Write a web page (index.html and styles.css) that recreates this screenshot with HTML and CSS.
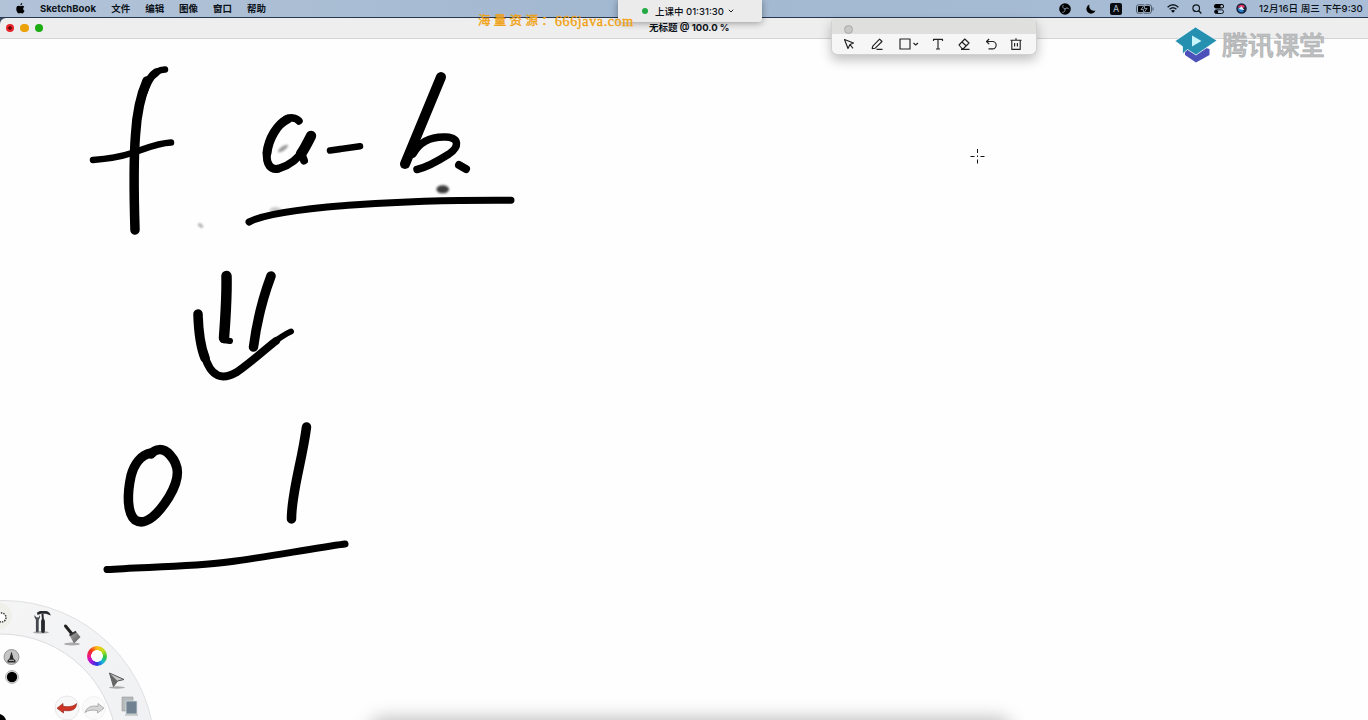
FILE: index.html
```html
<!DOCTYPE html>
<html lang="zh-CN">
<head>
<meta charset="utf-8">
<title>SketchBook</title>
<link rel="stylesheet" href="styles.css">
</head>
<body>
<div class="desktop">
  <header class="menubar">
    <nav class="menus">
      <svg class="apple" viewBox="0 0 10 12"><path d="M7 0C5.500 .2 4.700 1.400 4.900 2.600 6.200 2.500 7 1.300 7 0ZM5 3.500C4.300 3.500 3.700 3 2.900 3 1.300 3 .3 4.400 .3 6.500.3 9 1.900 11.500 3.100 11.500 3.800 11.500 4.200 11.100 5 11.100S6.200 11.500 6.900 11.500C8 11.500 9 10 9.500 8.600 8.600 8.200 8 7.400 8 6.300 8 5.300 8.500 4.600 9.200 4.100 8.700 3.400 7.900 3 7.100 3 6.200 3 5.600 3.500 5 3.500Z"/></svg>
      <span class="app">SketchBook</span><span>文件</span><span>编辑</span><span>图像</span><span>窗口</span><span>帮助</span>
    </nav>
    <div class="status">
      <svg class="i-obs" viewBox="0 0 12 12"><circle cx="6" cy="6" r="5.800"/><path d="M6 6C4 5.500 3.200 3.800 4.200 2.200M6 6C7.300 4.500 9.200 4.700 10 6.300M6 6C6.500 8 5.200 9.500 3.300 9.300" fill="none" stroke="#8799aa" stroke-width="1"/></svg>
      <svg class="i-moon" viewBox="0 0 10 10"><path d="M3.500.5A4.700 4.700 0 1 0 9.500 6.600 4.800 4.800 0 0 1 3.500.5Z"/></svg>
      <span class="input-source">A</span>
      <svg class="i-battery" viewBox="0 0 18 10"><rect x=".5" y=".8" width="15" height="8.400" rx="2" fill="none" stroke="#4b5967"/><rect x="2" y="2" width="12" height="6" rx=".7"/><path d="M17 3.500v3" stroke="#4b5967"/><path d="M9 0 5 5.600h2.700L7 10l4-5.600H8.300Z" stroke="#a9bdd2" stroke-width=".8"/></svg>
      <svg class="i-wifi" viewBox="0 0 12 9"><g fill="none" stroke="#101820" stroke-width="1.400"><path d="M.6 3.200Q6-1.500 11.400 3.200M2.600 5.200Q6 2.300 9.400 5.200"/></g><path d="M4 6.700Q6 5.100 8 6.700L6 8.800Z"/></svg>
      <svg class="i-search" viewBox="0 0 10 10"><path d="M6.800 6.800 9.300 9.400" stroke="#101820" stroke-width="1.400"/><circle cx="4.200" cy="4.200" r="3.300" fill="none" stroke="#101820" stroke-width="1.200"/></svg>
      <svg class="i-control" viewBox="0 0 10 10"><rect width="10" height="4.400" rx="2.200"/><circle cx="7.700" cy="2.200" r="1.300" fill="#a9bdd2"/><rect x=".5" y="5.800" width="9" height="3.700" rx="1.850" fill="none" stroke="#101820"/><circle cx="2.500" cy="7.650" r="1.700"/></svg>
      <svg class="i-siri" viewBox="0 0 12 12"><circle cx="6" cy="6" r="5.700" fill="#17223d"/><path d="M2 5C3 1.500 8 .8 9.800 4.300L6 6Z" fill="#e73562"/><path d="M2 5.500 6 4.500 8.500 9.500C5 11.500 1.500 9 2 5.500Z" fill="#247fcb"/><path d="M3 6.500 6 3.500 9.300 8Z" fill="#dff5ff"/></svg>
      <time class="clock">12月16日 周三 下午9:30</time>
    </div>
  </header>

  <div class="titlebar">
    <div class="lights"><i class="light close"></i><i class="light min"></i><i class="light max"></i></div>
    <span class="title">无标题 @ 100.0 %</span>
  </div>

  <main class="canvas">
    <svg class="ink" viewBox="0 39 1368 681">
      <g class="smudge">
        <ellipse cx="283" cy="148.500" rx="6" ry="2" transform="rotate(-35 283 148.500)" fill="#999"/>
        <ellipse cx="275.500" cy="210" rx="6" ry="3" fill="#ccc"/>
        <ellipse cx="200.500" cy="225.500" rx="3" ry="1.600" transform="rotate(35 200.500 225.500)" fill="#aaa"/>
        <ellipse cx="442.700" cy="189.300" rx="6.300" ry="4" fill="#3d3d3d"/>
      </g>
      <g class="strokes">
        <path stroke-width="6.500" d="M165 69.500C158 70 154 73 151 77"/>
        <path stroke-width="8" d="M156 72.500C150 76 146 85 143 94"/>
        <path stroke-width="9.500" d="M147 81C139 99 136.500 118 135.500 135 133.500 160 133.500 181 135 230"/>
        <path stroke-width="6.500" d="M93 160C107 159 120 157 132 153 147 148 158 143 171 142.500"/>
        <path stroke-width="7.500" d="M299 121C296 117.500 290 117 286 119"/>
        <path stroke-width="9" d="M288 119C277 124 268.500 139 267 153"/>
        <path stroke-width="8" d="M267 151C265.500 165 271 170.500 279 168.500 291 165 300 156 305 148"/>
        <path stroke-width="10.500" d="M311 136C308 142 305 148 301 154"/>
        <path stroke-width="8" d="M301 153 304 160.500"/>
        <path stroke-width="6.500" d="M330 150.500 360 146.300"/>
        <path stroke-width="10" d="M441 77 405 164"/>
        <path stroke-width="7.500" d="M413 154C421 139 434 136.500 446 137 460 138 459 147 449 154 438 161 428 167 417 169.500"/>
        <path stroke-width="8" d="M459 165 466 169"/>
        <path stroke-width="7" d="M249 222C269 212 323 207 360 204.500 410 201 455 200 511 200.300"/>
        <path stroke-width="10.500" d="M226.500 276C227 299 225.500 316 224 338"/>
        <path stroke-width="6" d="M223 340 230 341"/>
        <path stroke-width="9.500" d="M271 276C262 300 257 320 253.500 347"/>
        <path stroke-width="9.500" d="M198 314C198.500 332 201 348 205 358"/>
        <path stroke-width="8" d="M204 354C211 379 223 380 237 372 253 361 270 345 276 341"/>
        <path stroke-width="6" d="M270 345C278 339 285 334 291 331.500"/>
        <path stroke-width="9.500" d="M151 453C141 455 134 464 131 476 127 494 127 513 135 520 146 527 159 513 169 497 181 477 179 465 170 455 163 447 155 449 151 454"/>
        <path stroke-width="9.500" d="M306.500 427C302 462 291.500 492 291.500 519"/>
        <path stroke-width="7" d="M107 569.500C140 567 190 567 228 562 268 557 308 549 345 544"/>
      </g>
      <path class="cursor" d="M977.500 149v4M977.500 155.500v1.500M977.500 159.500v4M970.500 156.500h4M980.500 156.500h4"/>
    </svg>
    <div class="dock-shadow"></div>
  </main>

  <div class="class-pill"><i class="live"></i><span>上课中 01:31:30</span><svg class="chev" viewBox="0 0 6 4"><path d="M.8.8 3 3 5.200.8"/></svg></div>

  <div class="watermark"><span class="wm-cn">海量资源：</span><span class="wm-url">666java.com</span></div>

  <div class="palette">
    <div class="grip"><i></i></div>
    <div class="tools">
      <svg viewBox="0 0 12 12" class="t1"><path d="M1.500 1.500 10.500 5 7 6.500 5 10.500ZM7 6.500 10 10.300"/></svg>
      <svg viewBox="0 0 12 12" class="t2"><path d="M1 10.800 2 7.800 8.600 1.200 11 3.500 4 10.300 1 10.800M5.500 11.300H11.500"/></svg>
      <svg viewBox="0 0 20 12" class="t3"><path d="M1 1h10v10H1ZM14.500 5 16.700 7 19 5"/></svg>
      <svg viewBox="0 0 12 12" class="t4"><path d="M1.500 3V1.300h9V3M6 1.300V11M4 11h4"/></svg>
      <svg viewBox="0 0 12 12" class="t5"><path d="M1 7 6.800 1 11 5 5.500 10.500H4ZM4 4 8.300 8M3 11.300h8.500"/></svg>
      <svg viewBox="0 0 12 12" class="t6"><path d="M4.200 1 1.500 3.500 4.200 6.200M1.800 3.500H7.500A3.600 3.600 0 0 1 7.500 10.800H3.500"/></svg>
      <svg viewBox="0 0 12 12" class="t7"><path d="M.5 2.200h11M6 .3v1.700M1.800 2.500V11.300h8.400V2.500M4.600 5v3.500M7.400 5v3.500"/></svg>
    </div>
  </div>

  <div class="brand">
    <svg class="brand-mark" viewBox="0 0 42 36"><path d="M10 24 21 18 34.500 22V28L21 35.500 10 28Z" fill="#4b51b8"/><path d="M20.500 0 42 13.500 21 28 12.500 22.500 7.500 27V19.500L0 14Z" fill="#2590b0" stroke="#f5fafb" stroke-width=".8"/><path d="M17 8.500 26.500 14 17 19.500Z" fill="#c8f4fb"/></svg>
    <span>腾讯课堂</span>
  </div>

  <aside class="puck">
    <svg viewBox="0 590 170 130">
      <defs>
        <linearGradient id="ring" x1="0" y1="0" x2="1" y2="1"><stop offset="0" stop-color="#f7f7f7"/><stop offset="1" stop-color="#eeeff2"/></linearGradient>
        <linearGradient id="brushGray" x1="0" y1="0" x2="1" y2="1"><stop offset="0" stop-color="#aaa"/><stop offset="1" stop-color="#555"/></linearGradient>
      </defs>
      <circle cx="3" cy="752.500" r="152" fill="url(#ring)" stroke="#d8d9db" stroke-width=".8"/>
      <circle cx="-2" cy="616" r="14" fill="#f0f0eb"/>
      <circle cx="1" cy="750" r="116" fill="#fefefe" stroke="#d2d3d5" stroke-width=".8"/>
      <circle cx="1.500" cy="617.500" r="4.500" fill="#fff" stroke="#333" stroke-width="1.500" stroke-dasharray="1.500 1"/>
      <g fill="#aaa"><ellipse cx="41" cy="632.300" rx="8" ry="1.300"/><ellipse cx="72" cy="644" rx="8" ry="1.400"/><ellipse cx="117" cy="687.500" rx="8" ry="1.200"/></g>
      <path d="M37.300 619V631" stroke="#44484e" stroke-width="2.800" stroke-linecap="round"/>
      <path d="M34.500 615C34 618.500 36 620 37.500 620S40.500 618 40 615L38.500 617.500H36.500Z" fill="#4b4e53"/>
      <path d="M42.500 614 43 621" stroke="#25282c" stroke-width="2"/><path d="M43 621V631" stroke="#25282c" stroke-width="3.800" stroke-linecap="round"/>
      <path d="M37 612.500 40 611H45.500C48 611 50 612.500 50.800 615.500L46 613.700H41L37.500 615Z" fill="#25282c"/>
      <path d="M65.500 626 72 634" stroke="#222" stroke-width="3" stroke-linecap="round"/>
      <path d="M69.500 635.500 76 631.500 80.500 637 74 643.500Z" fill="url(#brushGray)"/><path d="M69.500 635.500 76 631.500" stroke="#333" stroke-width="2"/>
      <path d="M109.500 673 124 679.500 117.500 681 113.500 686.500Z" fill="#c8c8c8" stroke="#555" stroke-width="1"/><path d="M109.500 673 117.500 681 113.500 686.500Z" fill="#666"/>
      <path d="M122 697H133V711H122Z" fill="#b7babc" stroke="#999" stroke-width=".6"/><path d="M126 701H137V714H126Z" fill="#708191" stroke="#d7dde1" stroke-width=".8"/><path d="M125 715H138" stroke="#aaa"/>
      <circle cx="11.500" cy="657" r="7.500" fill="#c5c5c5" stroke="#777" stroke-width=".7"/><path d="M11.500 651.500 12.800 656 13.500 658.500 15.500 660.500V662.500H7.500V660.500L9.500 658.500 10.200 656Z" fill="#292929"/><path d="M9 660.300h5" stroke="#eee" stroke-width=".8"/>
      <circle cx="12" cy="677" r="6.300" fill="#fff" stroke="#888" stroke-width=".8"/><circle cx="12" cy="677" r="5.200"/>
      <circle cx="67" cy="708" r="12" fill="#f8f8f8" stroke="#e0e0e0" stroke-width=".7"/><circle cx="94" cy="708" r="11.500" fill="#fafafa" stroke="#eee" stroke-width=".7"/>
      <path d="M57 708.200 63 703.500V706.300C69 707.200 73.500 706.500 76.500 703.500 76.500 709.500 72 711.500 63.500 710.500V713Z" fill="#cf3323" stroke="#932b21" stroke-width=".7"/>
      <path d="M104 708.200 98 703.500V706.300C92 705.500 87 706.500 85 712.500 88 710 92 709.800 97.500 710.500V713Z" fill="#d5d5d5" stroke="#999" stroke-width=".7"/>
      <path d="M0 714A9 9 0 0 1 6 720H0Z"/>
    </svg>
    <i class="wheel"></i>
  </aside>
</div>
</body>
</html>
```
FILE: styles.css
```css
* { box-sizing: border-box; }
body { margin: 0; overflow: hidden; background: #fff; font-family: Inter, "Noto Sans CJK SC", sans-serif; color: #0c1219; }
svg { display: block; flex: none; }
.desktop { position: relative; width: 1368px; height: 720px; display: flex; flex-direction: column; overflow: hidden; background: #3b4a60; }
.menubar { height: 18px; flex: none; display: flex; justify-content: space-between; padding: 0 2px 0 16px; background: linear-gradient(90deg, #b2c3d8, #a2b8d0 45%, #a9bed6); border-bottom: 1px solid #263750; font-size: 9.5px; font-weight: 600; line-height: 17px; white-space: nowrap; }
.menus { display: flex; align-items: center; gap: 14.9px; }
.apple { width: 9px; height: 11px; margin-bottom: 1px; }
.app { font-weight: 700; font-size: 9.6px; width: 56.5px; }
.status { display: flex; align-items: center; }
.i-obs { width: 12px; height: 12px; margin-right: 15px; }
.i-moon { width: 10px; height: 10px; margin-right: 14px; }
.input-source { width: 12px; height: 12px; margin-right: 14px; border-radius: 2px; background: #080b0f; color: #b6c7d8; font: 9px/12px Inter, sans-serif; text-align: center; }
.i-battery { width: 18px; height: 10px; margin-right: 13px; }
.i-wifi { width: 12px; height: 9px; margin-right: 12.5px; }
.i-search { width: 10px; height: 10px; margin-right: 12.5px; }
.i-control { width: 10px; height: 10px; margin-right: 12px; }
.i-siri { width: 11px; height: 11px; margin-right: 12px; }
.clock { width: 107px; font-size: 9.6px; font-weight: 500; }
.titlebar { height: 21px; flex: none; display: grid; grid-template-columns: 1fr auto 1fr; align-items: center; padding: 0 0 0 5.5px; background: #efeeef; border-bottom: 1px solid #d3d3d3; border-top-left-radius: 6px; }
.lights { display: flex; gap: 6px; }
.light { width: 8.5px; height: 8.5px; border-radius: 50%; }
.close { background: radial-gradient(circle, #6d0909 0 1.5px, #e8252a 2px); }
.min { background: #eba20a; }
.max { background: #1bac12; }
.title { font-size: 9.5px; font-weight: 700; line-height: 18px; transform: translateX(2.5px); }
.canvas { position: relative; flex: 1; background: #fefefe; overflow: hidden; }
.ink { width: 1368px; height: 681px; }
.strokes { fill: none; stroke: #000; stroke-linecap: round; stroke-linejoin: round; filter: blur(.7px); }
.smudge { filter: blur(.8px); }
.cursor { fill: none; stroke: #111; stroke-width: 1; }
.dock-shadow { position: absolute; left: 372px; bottom: -20px; width: 637px; height: 20px; border-radius: 10px; box-shadow: 0 0 18px 2px rgba(0,0,0,.26); }
.watermark { position: absolute; left: 478px; top: 13px; display: flex; line-height: 17px; color: #f0a00c; font-family: "Liberation Serif", "Noto Sans CJK SC", serif; white-space: nowrap; -webkit-text-stroke: .3px #f0a00c; }
.wm-cn { width: 77px; font-size: 12.5px; letter-spacing: 3.3px; }
.wm-url { font-size: 14px; letter-spacing: .62px; }
.class-pill { position: absolute; left: 618px; top: 0; width: 144px; height: 22px; padding: 0 0 1px 24px; display: flex; align-items: center; gap: 7px; background: #ecebeb; border-radius: 0 0 3px 3px; box-shadow: 0 1px 7px rgba(0,0,0,.38); font-size: 9.5px; font-weight: 500; white-space: nowrap; }
.class-pill span { width: 67px; }
.live { width: 6px; height: 6px; border-radius: 50%; background: #21aa43; }
.chev { width: 6px; height: 4px; fill: none; stroke: #222; stroke-width: 1; margin-left: -1.500px; }
.palette { position: absolute; left: 831px; top: 19px; width: 206px; height: 36px; border: 1px solid #d1d1d1; border-top-color: #dededd; border-radius: 4px 4px 6px 6px; background: #f7f6f7; box-shadow: 0 5px 12px rgba(0,0,0,.25); overflow: hidden; }
.grip { height: 14px; padding: 5px 0 0 11.5px; background: #dfdfdd; }
.grip i { display: block; width: 9px; height: 9px; border: 1px solid #aaa; border-radius: 50%; background: #c8c8c8; }
.tools { display: flex; align-items: center; height: 21px; padding: 0 0 1px 10.5px; }
.tools svg { width: 12px; height: 12px; fill: none; stroke: #222; stroke-width: 1.15; stroke-linejoin: round; }
.tools .t1 { margin-right: 16px; }
.tools .t2 { margin-right: 16px; }
.tools .t3 { width: 20px; margin-right: 13px; }
.tools .t4 { margin-right: 14px; }
.tools .t5 { margin-right: 15px; }
.tools .t6 { margin-right: 13px; }
.brand { position: absolute; left: 1175px; top: 27px; display: flex; align-items: center; gap: 5px; color: #bfc1c2; font: 500 26px/34px "Noto Sans CJK SC", sans-serif; letter-spacing: -.3px; white-space: nowrap; -webkit-text-stroke: .6px #a9abad; }
.brand span { margin-top: -2px; }
.brand-mark { width: 42px; height: 36px; }
.puck { position: absolute; left: 0; bottom: 0; width: 170px; height: 130px; }
.wheel { position: absolute; left: 86.5px; top: 56px; width: 20px; height: 20px; border-radius: 50%; background: radial-gradient(circle, #fff 0 5.600px, transparent 6.100px), conic-gradient(#ffbd16, #bce020 15%, #29c63d 27%, #1bb8dd 38%, #2d39df 50%, #a317e0 63%, #ed1894 73%, #f02f20 86%, #ffbd16); }
```
